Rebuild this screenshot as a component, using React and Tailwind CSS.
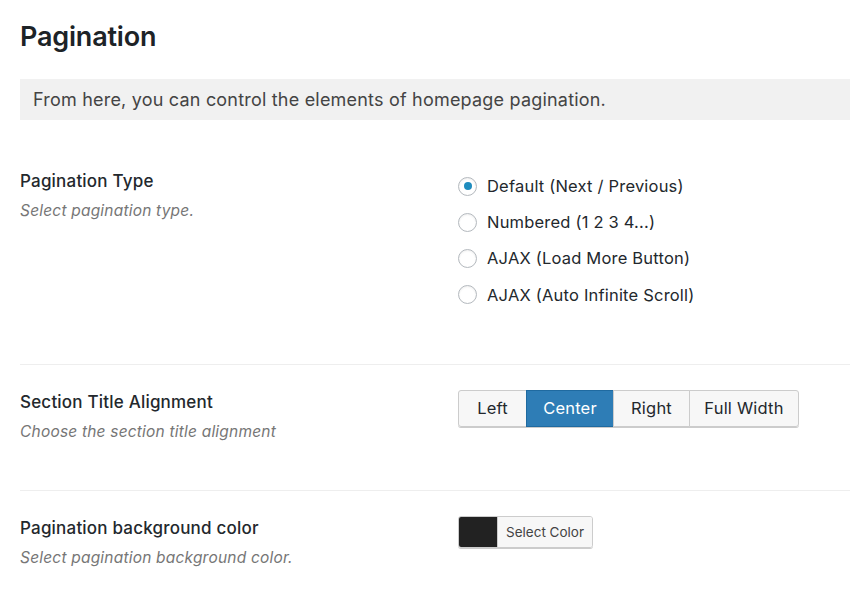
const options = [
  "Default (Next / Previous)",
  "Numbered (1 2 3 4...)",
  "AJAX (Load More Button)",
  "AJAX (Auto Infinite Scroll)",
];

const aligns = [
  { label: "Left", w: "w-[69px]" },
  { label: "Center", w: "w-[88px]", active: true },
  { label: "Right", w: "w-[77px]" },
  { label: "Full Width", w: "w-[110px]" },
];

const Radio = ({ checked }) => (
  <span className="w-[19px] h-[19px] rounded-full border border-[#b4b9be] bg-white shadow-[inset_0_1px_2px_rgba(0,0,0,0.07)] flex items-center justify-center">
    {checked && <span className="w-[8px] h-[8px] rounded-full bg-[#1e8cbe]" />}
  </span>
);

const Label = ({ title, desc }) => (
  <div className="w-[438px] shrink-0">
    <div className="text-[17px] font-medium tracking-[0.2px] text-[#23282d] leading-[20px]">{title}</div>
    <div className="mt-[10px] text-[15.5px] italic tracking-[0.2px] text-[#767676] leading-[20px]">{desc}</div>
  </div>
);

export default function App() {
  return (
    <div
      className="bg-white min-h-[595px] pl-[20px] text-[#23282d]"
      style={{ fontFamily: "Inter, 'Noto Sans', sans-serif" }}
    >
      <h1 className="pt-[21px] text-[27px] font-semibold leading-[32px] tracking-[-0.2px] text-[#1d2327]">
        Pagination
      </h1>
      <div className="mt-[26px] h-[41px] bg-[#f1f1f1] pl-[13px] flex items-center text-[18px] tracking-[0.2px] text-[#444]">
        From here, you can control the elements of homepage pagination.
      </div>

      <div className="flex pt-[51px] pb-[59px] border-b border-[#eeeeee]">
        <Label title="Pagination Type" desc="Select pagination type." />
        <div className="flex flex-col gap-[16.3px] pt-[5px]">
          {options.map((o, i) => (
            <div key={o} className="flex items-center gap-[10px] h-[20px] text-[16.5px] tracking-[0.2px] text-[#23282d]">
              <Radio checked={i === 0} />
              <span>{o}</span>
            </div>
          ))}
        </div>
      </div>

      <div className="flex pt-[27px] pb-[48px] border-b border-[#eeeeee]">
        <Label title="Section Title Alignment" desc="Choose the section title alignment" />
        <div className="flex h-[37px] mt-[-2px] rounded-[3px] shadow-[0_1px_0_#cccccc]">
          {aligns.map((a, i) => (
            <div
              key={a.label}
              className={`${a.w} flex items-center justify-center text-[16.5px] tracking-[0.2px] border ${
                a.active
                  ? "bg-[#2e7db6] border-[#1f6aa0] text-white"
                  : "bg-[#f7f7f7] border-[#cccccc] text-[#23282d]"
              } ${i === 0 ? "rounded-l-[3px]" : "-ml-px"} ${i === aligns.length - 1 ? "rounded-r-[3px]" : ""}`}
            >
              {a.label}
            </div>
          ))}
        </div>
      </div>

      <div className="flex pt-[27px]">
        <Label title="Pagination background color" desc="Select pagination background color." />
        <div className="flex h-[32px] mt-[-2px] rounded-[3px] border border-[#cccccc] shadow-[0_1px_0_#cccccc] overflow-hidden">
          <span className="w-[38px] bg-[#222222]" />
          <span className="px-[8px] bg-[#f7f7f7] border-l border-[#cccccc] flex items-center text-[13.5px] text-[#444]">
            Select Color
          </span>
        </div>
      </div>
    </div>
  );
}
